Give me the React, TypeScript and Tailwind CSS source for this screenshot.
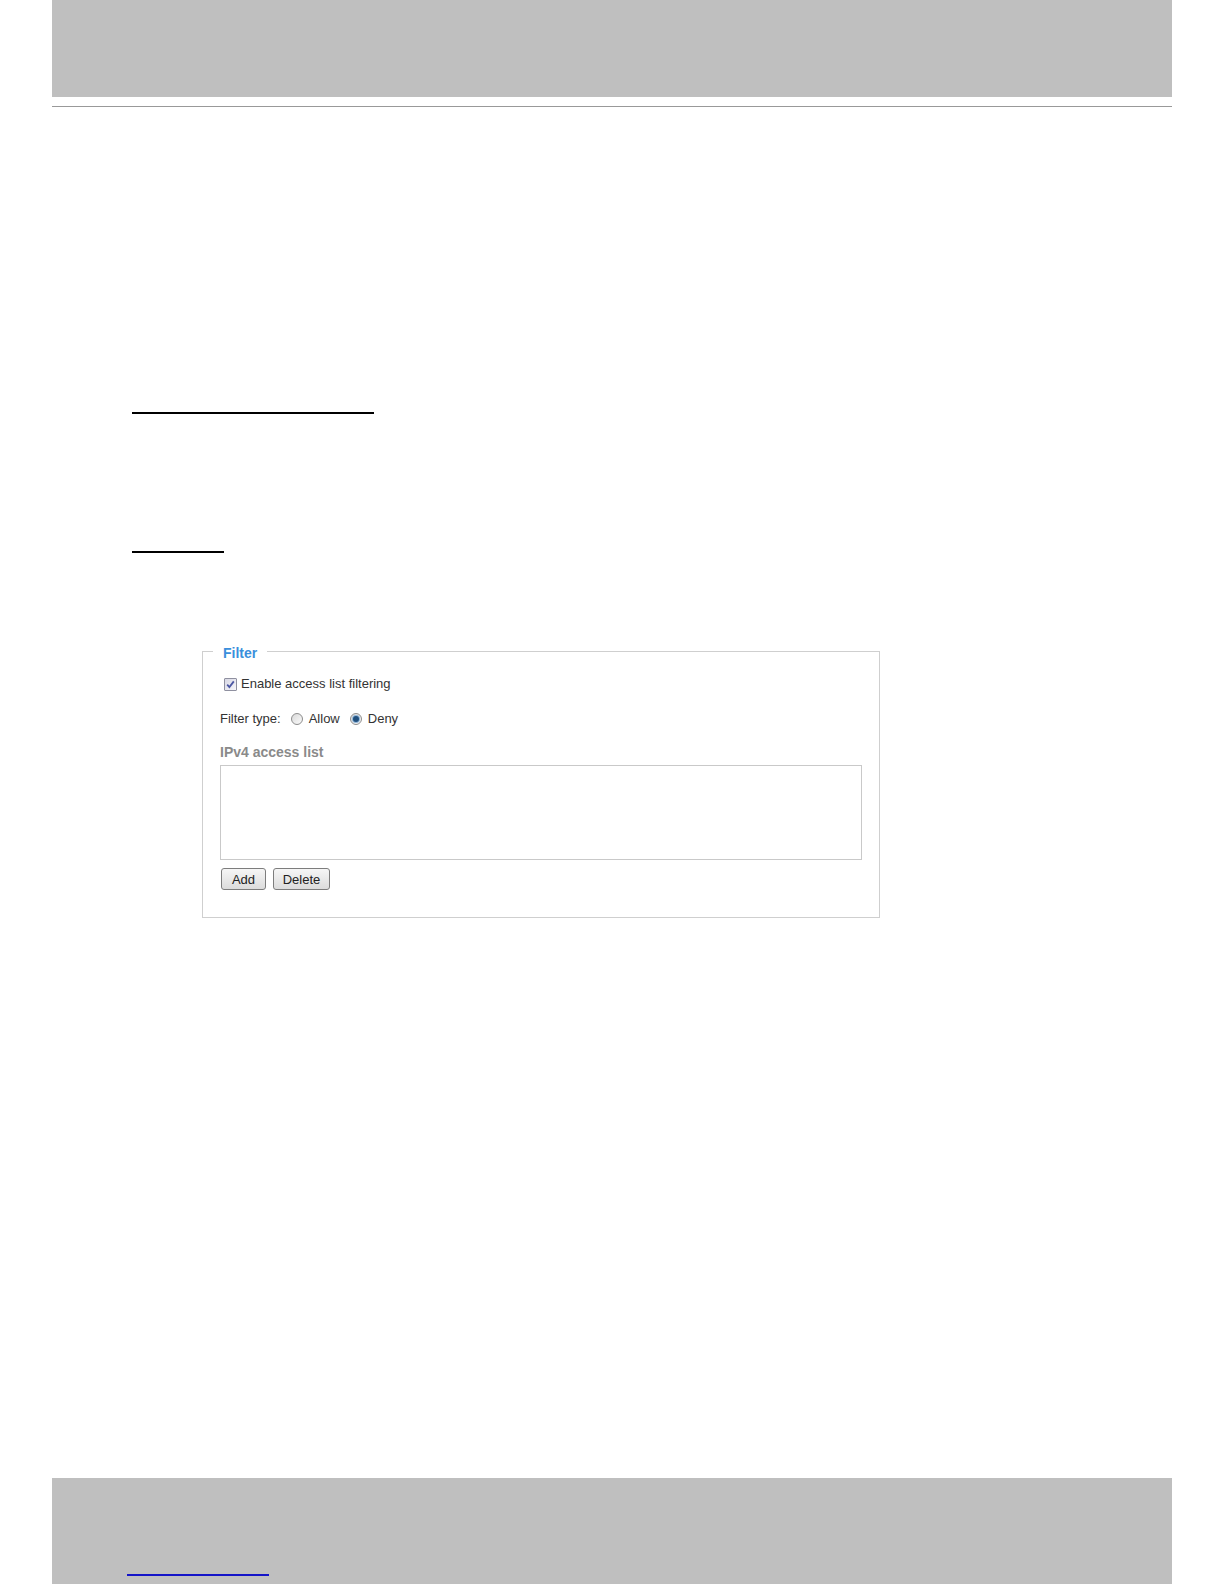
import React from 'react';

function CheckBox() {
  return (
    <span className="flex h-[13px] w-[13px] items-center justify-center rounded-[1px] border border-[#8f90a0] bg-gradient-to-br from-[#d8d8e4] to-[#f6f6fa]">
      <svg width="9" height="9" viewBox="0 0 9 9">
        <path d="M1.2 4.6 L3.4 7 L7.8 1.4" fill="none" stroke="#4b57a3" strokeWidth="1.8" />
      </svg>
    </span>
  );
}

function Radio({ checked }: { checked?: boolean }) {
  return (
    <span className="flex h-[12px] w-[12px] items-center justify-center rounded-full border border-[#8d8d8d] bg-gradient-to-br from-[#d9d9d9] to-[#fbfbfb]">
      {checked && <span className="h-[6px] w-[6px] rounded-full bg-[#21507e] ring-1 ring-[#8fb6d9]" />}
    </span>
  );
}

function Button({ label, width }: { label: string; width: string }) {
  return (
    <button
      className={`h-[22px] ${width} rounded-[3px] border border-[#7d7d7d] bg-gradient-to-b from-[#f6f6f6] to-[#dcdcdc] text-[13px] leading-none text-[#222]`}
    >
      {label}
    </button>
  );
}

export default function App() {
  return (
    <div className="mx-auto flex h-[1584px] w-[1224px] flex-col bg-white font-['Liberation_Sans',Arial,sans-serif] text-[#333]">
      {/* page header band */}
      <div className="mx-[52px] h-[97px] bg-[#bfbfbf]" />
      <div className="mx-[52px] mt-[9px] h-px bg-[#999]" />

      {/* section heading underlines */}
      <div className="pl-[132px]">
        <div className="mt-[305px] h-[2px] w-[242px] bg-black" />
        <div className="mt-[137px] h-[2px] w-[92px] bg-black" />
      </div>

      {/* filter panel */}
      <fieldset className="ml-[202px] mt-[89px] w-[678px] border border-[#cfcfcf] px-[17px] pb-[27px]">
        <legend className="ml-[-7px] px-[10px] pt-[4px] text-[14px] font-bold leading-[14px] text-[#3a8fdc]">Filter</legend>

        <label className="mt-[14px] flex h-[20px] items-center gap-[4px] pl-[4px] text-[13px]">
          <CheckBox />
          <span>Enable access list filtering</span>
        </label>

        <div className="mt-[15px] flex h-[20px] items-center text-[13px]">
          <span>Filter type:</span>
          <span className="ml-[10px] flex items-center gap-[6px]">
            <Radio />
            <span>Allow</span>
          </span>
          <span className="ml-[10px] flex items-center gap-[6px]">
            <Radio checked />
            <span>Deny</span>
          </span>
        </div>

        <div className="mt-[14px] h-[18px] text-[14px] font-bold leading-[18px] text-[#8a8a8a]">IPv4 access list</div>

        <div className="mt-[4px] h-[95px] w-full border border-[#c9c9c9] bg-white" />

        <div className="mt-[8px] flex gap-[7px] pl-px">
          <Button label="Add" width="w-[45px]" />
          <Button label="Delete" width="w-[57px]" />
        </div>
      </fieldset>

      {/* page footer band */}
      <div className="mx-[52px] mt-auto h-[106px] bg-[#bfbfbf] pl-[75px] pt-[96px]">
        <div className="h-[2px] w-[142px] bg-[#1414c8]" />
      </div>
    </div>
  );
}
